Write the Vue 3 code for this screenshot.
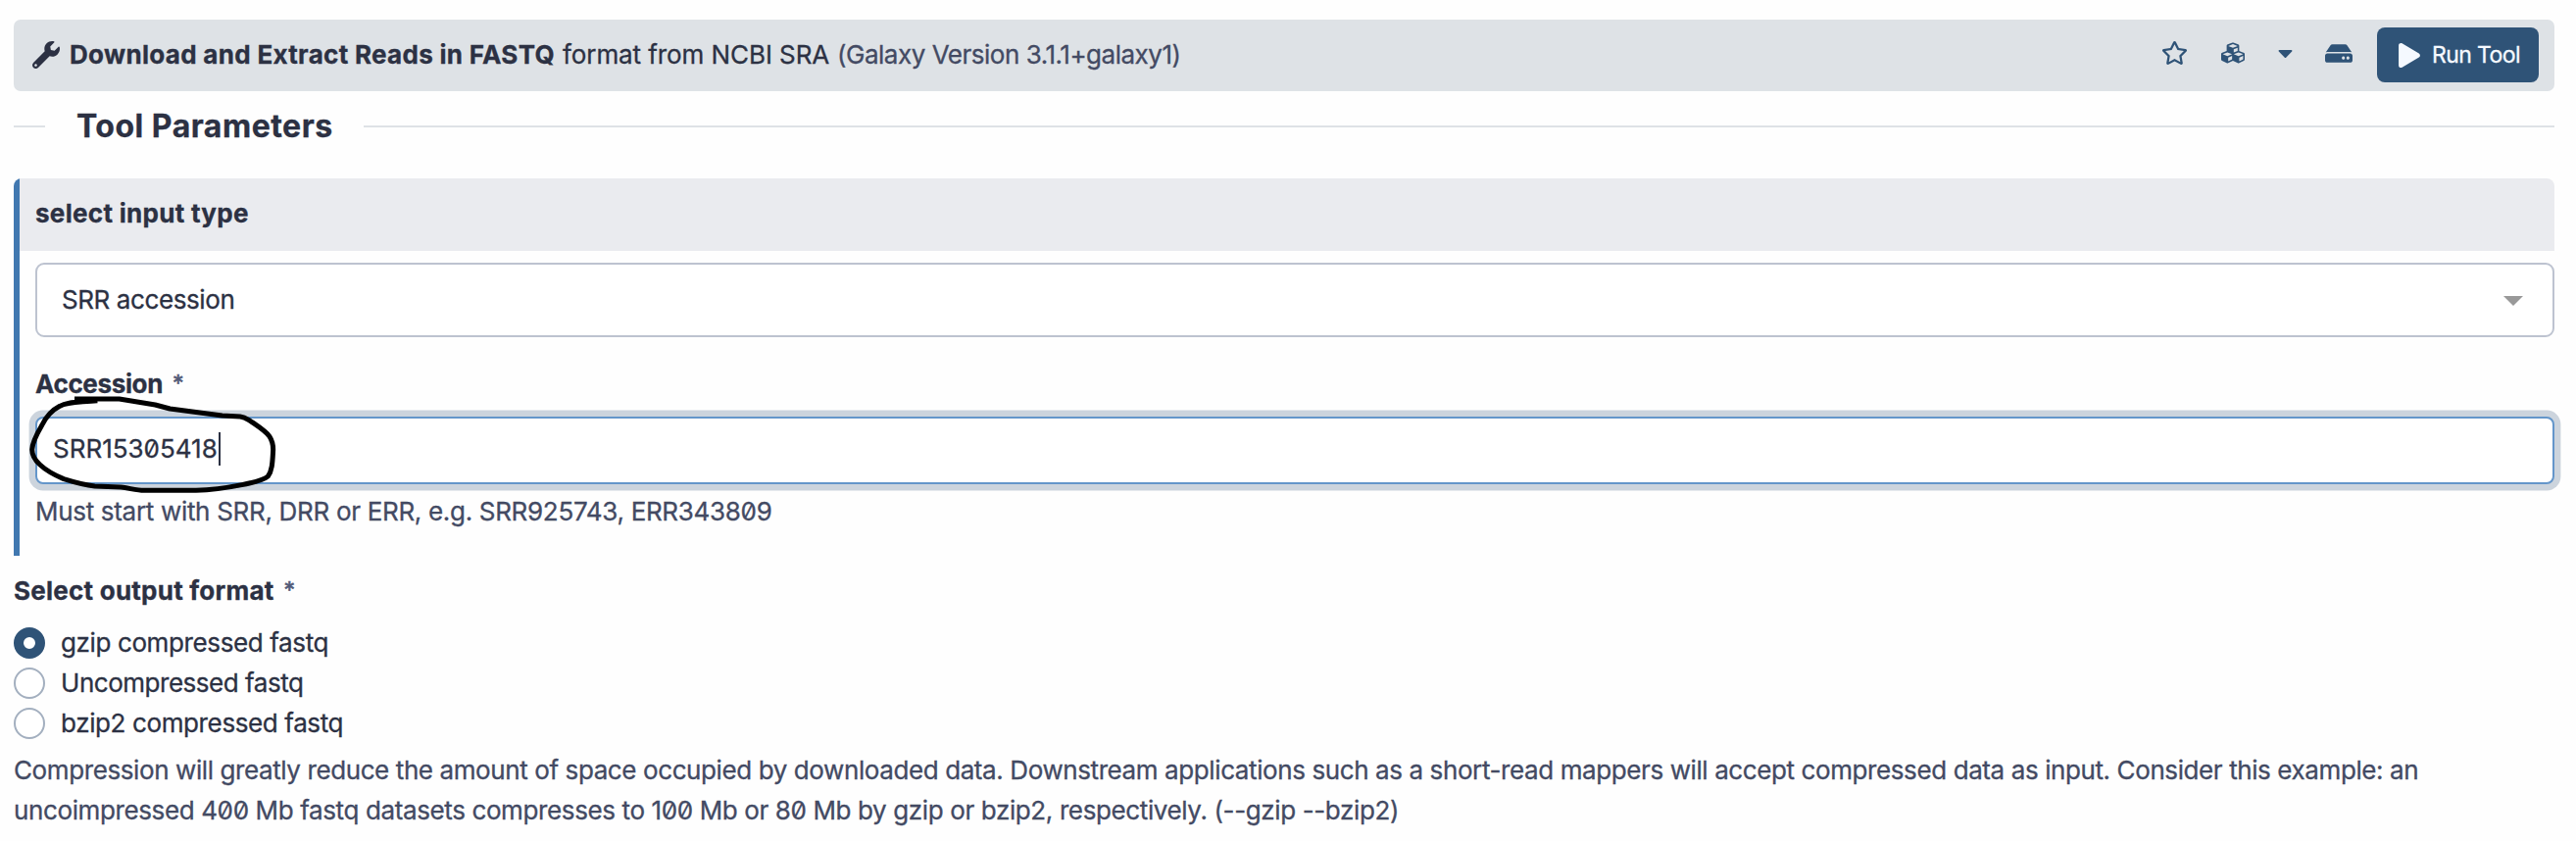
<script setup>
import { ref } from 'vue'

const accession = ref('SRR15305418')
const selected = ref('gzip')
const formats = [
  { id: 'gzip', label: 'gzip compressed fastq' },
  { id: 'none', label: 'Uncompressed fastq' },
  { id: 'bzip2', label: 'bzip2 compressed fastq' },
]
</script>

<template>
  <main class="tool">
    <header class="bar">
      <svg class="wrench" viewBox="0 0 512 512"><path d="M507.73 109.1c-2.24-9.03-13.54-12.09-20.12-5.51l-74.36 74.36-67.88-11.31-11.31-67.88 74.36-74.36c6.62-6.62 3.43-17.9-5.66-20.16-47.38-11.74-99.55.91-136.58 37.93-39.64 39.64-50.55 97.1-34.05 147.2L18.74 402.76c-24.99 24.99-24.99 65.51 0 90.5 24.99 24.99 65.51 24.99 90.5 0l213.21-213.21c50.12 16.71 107.47 5.68 147.37-34.22 37.07-37.07 49.7-89.32 37.91-136.73zM64 472c-13.25 0-24-10.75-24-24 0-13.26 10.75-24 24-24s24 10.74 24 24c0 13.25-10.75 24-24 24z" /></svg>
      <h1 class="name">Download and Extract Reads in FASTQ</h1>
      <span class="desc">format from NCBI SRA</span>
      <span class="version">(Galaxy Version 3.1.1+galaxy1)</span>
      <div class="actions">
        <svg class="star" viewBox="0 0 576 512"><path d="M528.1 171.5L382 150.2 316.7 17.8c-11.7-23.6-45.6-23.9-57.4 0L194 150.2 47.9 171.5c-26.2 3.8-36.7 36.1-17.7 54.6l105.7 103-25 145.5c-4.5 26.3 23.2 46 46.4 33.7L288 439.6l130.7 68.7c23.2 12.2 50.9-7.4 46.4-33.7l-25-145.5 105.7-103c19-18.5 8.5-50.8-17.7-54.6zM388.6 312.3l23.7 138.4L288 385.4l-124.3 65.3 23.7-138.4-100.6-98 139-20.2 62.2-126 62.2 126 139 20.2-100.6 98z" /></svg>
        <svg class="cubes" viewBox="0 0 512 512"><path d="M488.6 250.2L392 214V105.5c0-15-9.3-28.4-23.4-33.7l-100-37.5c-8.1-3.1-17.1-3.1-25.3 0l-100 37.5c-14.1 5.3-23.4 18.7-23.4 33.7V214l-96.6 36.2C9.3 255.5 0 268.9 0 283.9V394c0 13.6 7.7 26.1 19.9 32.2l100 50c10.1 5.1 22.1 5.1 32.2 0l103.9-52 103.9 52c10.1 5.1 22.1 5.1 32.2 0l100-50c12.2-6.1 19.9-18.6 19.9-32.2V283.9c0-15-9.3-28.4-23.4-33.7zM358 214.8l-85 31.9v-68.2l85-37v73.3zM154 104.1l102-38.2 102 38.2v.6l-102 41.4-102-41.4v-.6zm84 291.1l-85 42.5v-79.1l85-38.8v75.4zm0-112l-102 41.4-102-41.4v-.6l102-38.2 102 38.2v.6zm240 112l-85 42.5v-79.1l85-38.8v75.4zm0-112l-102 41.4-102-41.4v-.6l102-38.2 102 38.2v.6z" /></svg>
        <svg class="caret" viewBox="0 0 320 512"><path d="M31.3 192h257.3c17.8 0 26.7 21.5 14.1 34.1L174.1 354.8c-7.8 7.8-20.5 7.8-28.3 0L17.2 226.1C4.6 213.5 13.5 192 31.3 192z" /></svg>
        <svg class="drive" viewBox="0 0 576 512"><path d="M576 304v96c0 26.51-21.49 48-48 48H48c-26.51 0-48-21.49-48-48v-96c0-26.51 21.49-48 48-48h480c26.51 0 48 21.49 48 48zm-48-80a79.557 79.557 0 0 1 30.777 6.165L462.25 85.374A48.003 48.003 0 0 0 422.311 64H153.689a48 48 0 0 0-39.938 21.374L17.223 230.165A79.557 79.557 0 0 1 48 224h480zm-48 96c-17.673 0-32 14.327-32 32s14.327 32 32 32 32-14.327 32-32-14.327-32-32-32zm-96 0c-17.673 0-32 14.327-32 32s14.327 32 32 32 32-14.327 32-32-14.327-32-32-32z" /></svg>
        <button class="run" type="button">
          <svg class="play" viewBox="0 0 448 512"><path d="M424.4 214.7L72.4 6.6C43.8-10.3 0 6.1 0 47.9V464c0 37.5 40.7 60.1 72.4 41.3l352-208c31.4-18.5 31.5-64.1 0-82.6z" /></svg>
          <span>Run Tool</span>
        </button>
      </div>
    </header>

    <div class="divider"><h2>Tool Parameters</h2></div>

    <section class="group">
      <div class="group-head"><span>select input type</span></div>
      <div class="group-body">
        <div class="select"><span>SRR accession</span><i class="arrow"></i></div>
        <div class="label acc-label"><b>Accession</b><span class="req">*</span></div>
        <div class="field">
          <span class="value">{{ accession }}</span><i class="cursor"></i>
          <svg class="scribble" viewBox="0 0 900 340">
            <path d="M228 60H365L475 78L520 90L680 111L735 114C750 116 755 121 770 130C795 147 815 160 825 175C834 189 836 198 836 215C834 250 834 278 820 297C808 308 780 315 740 323C690 333 640 339 600 340H440C420 340 395 333 370 330L290 327C260 324 240 319 195 305C160 290 140 278 122 261C106 246 98 233 98 215C99 195 111 170 128 141C142 112 160 94 183 82C205 69 235 71 298 65" />
          </svg>
        </div>
        <p class="help group-help">Must start with SRR, DRR or ERR, e.g. SRR925743, ERR343809</p>
      </div>
    </section>

    <section class="output">
      <div class="label out-label"><b>Select output format</b><span class="req">*</span></div>
      <div
        v-for="f in formats"
        :key="f.id"
        class="option"
        :class="[f.id, { on: f.id === selected }]"
        @click="selected = f.id"
      >
        <i class="radio"></i><span>{{ f.label }}</span>
      </div>
      <p class="help output-help">
        <span class="line-a">Compression will greatly reduce the amount of space occupied by downloaded data. Downstream applications such as a short-read mappers will accept compressed data as input. Consider this example: an</span>
        <span class="line-b">uncoimpressed 400 Mb fastq datasets compresses to 100 Mb or 80 Mb by gzip or bzip2, respectively. (--gzip --bzip2)</span>
      </p>
    </section>
  </main>
</template>

<style>
body { background: #fefefe; }
</style>

<style scoped>
* { box-sizing: border-box; }
h1, h2, p { margin: 0; }
svg { flex: none; fill: currentColor; }

.tool {
  height: 858px;
  padding: 20px 22px 0 14px;
  color: #2c3143;
  font-family: Inter, "Liberation Sans", sans-serif;
  font-size: 26px;
  font-feature-settings: "zero";
  white-space: nowrap;
  -webkit-text-stroke: .3px currentColor;
}

.bar {
  display: flex;
  align-items: center;
  height: 73px;
  padding: 0 16px 1px 19px;
  border-radius: 7px;
  background: #dee2e6;
}
.wrench { width: 28px; height: 28px; margin-right: 10px; }
.name { width: 503px; font-size: 26px; line-height: 34px; letter-spacing: .31px; }
.desc { width: 280px; letter-spacing: -.08px; line-height: 34px; }
.version { color: #434a63; letter-spacing: -.48px; line-height: 34px; }

.actions {
  display: flex;
  align-items: center;
  margin-left: auto;
  color: #2f5377;
}
.star { width: 27px; height: 24px; margin: -4px 34px 0 0; }
.cubes { width: 24px; height: 24px; margin: -4px 34px 0 0; }
.caret { width: 15px; height: 24px; margin: -4px 33px 0 0; }
.drive { width: 28px; height: 25px; margin: -4px 25px 0 0; }
.run {
  display: flex;
  align-items: center;
  width: 165px;
  height: 56px;
  padding: 0 0 0 22px;
  border: 0;
  border-radius: 8px;
  background: #2f5377;
  color: #f5f9ff;
  font: 400 23px/30px Inter, sans-serif;
  letter-spacing: -.6px;
  -webkit-text-stroke: .3px currentColor;
}
.play { width: 22px; height: 25px; margin-right: 12px; }

.divider {
  display: flex;
  align-items: center;
  height: 72px;
  gap: 32px;
}
.divider::before, .divider::after {
  content: "";
  height: 2px;
  background: #dee2e6;
}
.divider::before { width: 32px; }
.divider::after { flex: 1; }
.divider h2 {
  width: 261px;
  font-size: 32px;
  line-height: 40px;
  letter-spacing: .5px;
}

.group {
  height: 385px;
  margin-top: 17px;
  border-left: 6px solid #4178b0;
  border-radius: 8px 8px 0 0;
}
.group-head {
  display: flex;
  align-items: center;
  height: 74px;
  padding: 0 0 3px 16px;
  border-radius: 0 8px 0 0;
  background: #eaebef;
  font-weight: 700;
  letter-spacing: .3px;
}
.group-body { padding: 12px 0 0 16px; }
.select {
  display: flex;
  align-items: center;
  justify-content: space-between;
  height: 76px;
  padding: 0 30px 0 25px;
  border: 2px solid #bdc3d0;
  border-radius: 9px;
  background: #fff;
  letter-spacing: -.4px;
}
.select span { margin-top: -1px; }
.arrow {
  border: 10px solid transparent;
  border-top-color: #999;
  border-bottom: 0;
  margin-top: 2px;
}
.label { display: flex; align-items: center; height: 40px; padding-bottom: 2px; }
.acc-label { margin-top: 28px; letter-spacing: -.35px; }
.out-label { letter-spacing: .24px; }
.req {
  margin-left: 10px;
  color: #525a78;
  font-size: 23px;
  line-height: 34px;
  -webkit-text-stroke: .6px currentColor;
}
.field {
  position: relative;
  display: flex;
  align-items: center;
  height: 69px;
  margin-top: 13px;
  padding: 0 0 3px 16px;
  border: 2px solid #6496ca;
  border-radius: 8px;
  background: #fff;
  box-shadow: 0 0 0 6.4px #ccd4dd;
}
.value { margin-top: -1px; }
.cursor { width: 2px; height: 34px; margin-left: 1px; background: #2c3143; }
/* Freehand ring drawn over the accession value */
.scribble {
  position: absolute;
  left: -38px;
  top: -40.33px;
  width: 300px;
  height: 113.33px;
  overflow: visible;
  fill: none;
  stroke: #000;
  stroke-width: 15;
  stroke-linejoin: round;
}
.help { color: #434a63; line-height: 41px; }
.group-help { margin-top: 7px; letter-spacing: -.31px; }

.output { padding-top: 16px; }
.option { display: flex; align-items: center; height: 41px; letter-spacing: -.38px; }
.out-label + .option { margin-top: 12px; }
.option.none { letter-spacing: -.47px; }
.option span { line-height: 34px; }
.radio {
  width: 32px;
  height: 32px;
  margin-right: 16px;
  border: 2px solid #a3afbf;
  border-radius: 50%;
  background: #fff;
}
.on .radio { border: 10px solid #2f5377; }
.output-help { margin-top: 7px; }
.output-help span { display: block; }
.line-a { letter-spacing: -.4px; }
.line-b { letter-spacing: -.38px; }
</style>
